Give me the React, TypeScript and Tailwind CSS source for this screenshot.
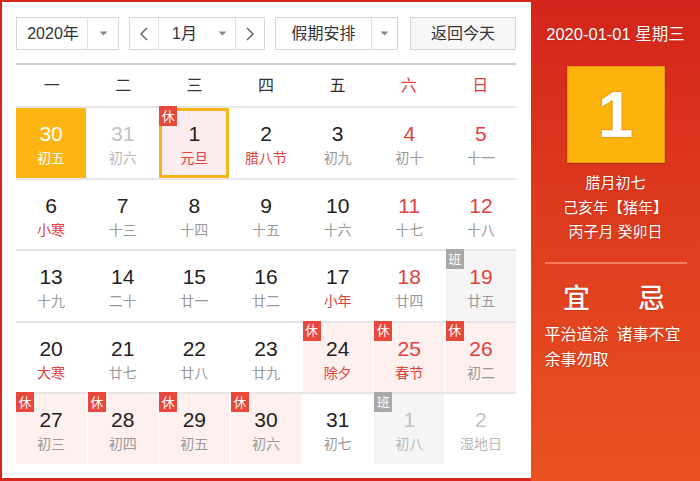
import React from "react";

type Cell = {
  d: number;
  l: string;
  kind?: "prev" | "next" | "cur";
  red?: boolean;
  lred?: boolean;
  badge?: "休" | "班";
  today?: boolean;
  sel?: boolean;
};

const rows: Cell[][] = [
  [
    { d: 30, l: "初五", kind: "prev", today: true },
    { d: 31, l: "初六", kind: "prev" },
    { d: 1, l: "元旦", lred: true, badge: "休", sel: true },
    { d: 2, l: "腊八节", lred: true },
    { d: 3, l: "初九" },
    { d: 4, l: "初十", red: true },
    { d: 5, l: "十一", red: true },
  ],
  [
    { d: 6, l: "小寒", lred: true },
    { d: 7, l: "十三" },
    { d: 8, l: "十四" },
    { d: 9, l: "十五" },
    { d: 10, l: "十六" },
    { d: 11, l: "十七", red: true },
    { d: 12, l: "十八", red: true },
  ],
  [
    { d: 13, l: "十九" },
    { d: 14, l: "二十" },
    { d: 15, l: "廿一" },
    { d: 16, l: "廿二" },
    { d: 17, l: "小年", lred: true },
    { d: 18, l: "廿四", red: true },
    { d: 19, l: "廿五", red: true, badge: "班" },
  ],
  [
    { d: 20, l: "大寒", lred: true },
    { d: 21, l: "廿七" },
    { d: 22, l: "廿八" },
    { d: 23, l: "廿九" },
    { d: 24, l: "除夕", lred: true, badge: "休" },
    { d: 25, l: "春节", red: true, lred: true, badge: "休" },
    { d: 26, l: "初二", red: true, badge: "休" },
  ],
  [
    { d: 27, l: "初三", badge: "休" },
    { d: 28, l: "初四", badge: "休" },
    { d: 29, l: "初五", badge: "休" },
    { d: 30, l: "初六", badge: "休" },
    { d: 31, l: "初七" },
    { d: 1, l: "初八", kind: "next", badge: "班" },
    { d: 2, l: "湿地日", kind: "next" },
  ],
];

const weekdays = ["一", "二", "三", "四", "五", "六", "日"];

function Arrow() {
  return (
    <svg width="9" height="5" viewBox="0 0 9 5">
      <path d="M0.5 0.5 L8.5 0.5 L4.5 4.5 Z" fill="#8a8a8a" />
    </svg>
  );
}

function DayCell({ c }: { c: Cell }) {
  let bg = "bg-white";
  if (c.today) bg = "bg-[#fdb514]";
  else if (c.badge === "休") bg = "bg-[#fdf0ee]";
  else if (c.badge === "班") bg = "bg-[#f5f5f5]";
  if (c.sel) bg = "bg-[#fdeced]";

  let numColor = "text-[#222]";
  let lunColor = "text-[#999]";
  if (c.today) {
    numColor = "text-white";
    lunColor = "text-white";
  } else if (c.kind === "prev" || c.kind === "next") {
    numColor = "text-[#c2c2c2]";
    lunColor = "text-[#b8b8b8]";
  } else {
    if (c.red) numColor = "text-[#e0413f]";
    if (c.lred) lunColor = "text-[#e0413f]";
  }

  return (
    <div className={`relative h-[69.5px] ${bg} flex flex-col items-center`}>
      {c.sel && (
        <div className="absolute inset-0 shadow-[inset_0_0_0_3px_#f6b51b]" />
      )}
      {c.badge && (
        <div
          className={`absolute left-0 top-[-2px] z-10 w-[18px] h-[20px] flex items-center justify-center text-[13px] leading-none text-white ${
            c.badge === "休" ? "bg-[#e8473c]" : "bg-[#a8a8a8]"
          }`}
        >
          {c.badge}
        </div>
      )}
      <div className={`mt-[15px] text-[21px] leading-[22px] ${numColor}`}>{c.d}</div>
      <div className={`mt-[3px] text-[14px] leading-[20px] ${lunColor}`}>{c.l}</div>
    </div>
  );
}

export default function App() {
  return (
    <div className="w-[700px] h-[481px] flex font-['Liberation_Sans','Noto_Sans_CJK_SC',sans-serif] overflow-hidden">
      {/* Left calendar */}
      <div className="w-[531px] h-[481px] bg-white border-l-2 border-t-2 border-b-[3px] border-[#d7261d] pl-[14px] pr-[15px] pt-[15px] flex flex-col">
        {/* Controls */}
        <div className="flex h-[33px] text-[16px] text-[#333]">
          <div className="w-[103px] h-full border border-[#d6d6d6] flex bg-white">
            <div className="flex-1 flex items-center justify-center pl-[2px]">2020年</div>
            <div className="w-[31px] border-l border-[#e2e2e2] flex items-center justify-center">
              <Arrow />
            </div>
          </div>
          <div className="ml-[10px] w-[136px] h-full border border-[#d6d6d6] flex bg-white">
            <div className="w-[29px] flex items-center justify-center border-r border-[#e2e2e2]">
              <svg width="8" height="14" viewBox="0 0 8 14">
                <path d="M7 1 L1 7 L7 13" fill="none" stroke="#555" strokeWidth="1.3" />
              </svg>
            </div>
            <div className="flex-1 flex items-center pl-[13px] pr-[8px] justify-between">
              <span>1月</span>
              <Arrow />
            </div>
            <div className="w-[29px] flex items-center justify-center border-l border-[#e2e2e2]">
              <svg width="8" height="14" viewBox="0 0 8 14">
                <path d="M1 1 L7 7 L1 13" fill="none" stroke="#555" strokeWidth="1.3" />
              </svg>
            </div>
          </div>
          <div className="ml-[10px] w-[123px] h-full border border-[#d6d6d6] flex bg-white">
            <div className="flex-1 flex items-center justify-center">假期安排</div>
            <div className="w-[26px] border-l border-[#e2e2e2] flex items-center justify-center">
              <Arrow />
            </div>
          </div>
          <div className="ml-[12px] w-[106px] h-full border border-[#d6d6d6] bg-[#f7f7f7] flex items-center justify-center">
            返回今天
          </div>
        </div>

        {/* Weekday header */}
        <div className="mt-[13px] border-t-2 border-[#cdcdcd] grid grid-cols-7 h-[43px] items-center text-[16px]">
          {weekdays.map((w, i) => (
            <div
              key={w}
              className={`text-center ${i >= 5 ? "text-[#e0413f]" : "text-[#333]"}`}
            >
              {w}
            </div>
          ))}
        </div>

        {/* Rows */}
        {rows.map((r, ri) => (
          <div key={ri} className="grid grid-cols-7 gap-x-[1.5px] border-t-2 border-[#e6e6e6]">
            {r.map((c, ci) => (
              <DayCell key={ci} c={c} />
            ))}
          </div>
        ))}
      </div>

      {/* Right panel */}
      <div className="flex-1 h-full bg-gradient-to-b from-[#d4241c] to-[#ea5221] flex flex-col items-center text-white [text-shadow:0_0_2px_rgba(150,20,0,0.5)]">
        <div className="mt-[24px] text-[16.5px] leading-[20px]">2020-01-01 星期三</div>
        <div className="mt-[22px] w-[98px] h-[97px] bg-[#fdb40c] border border-[#e79a10] shadow-[0_1px_2px_rgba(120,20,0,0.4)] flex items-center justify-center text-[64px] font-bold leading-none">
          1
        </div>
        <div className="mt-[8px] text-[15px] leading-[24.5px] text-center">
          <div>腊月初七</div>
          <div>己亥年【猪年】</div>
          <div>丙子月 癸卯日</div>
        </div>
        <div className="mt-[17px] w-[142px] h-[2px] bg-[#f17d5c]" />
        <div className="mt-[18px] w-[142px] flex text-[16px] leading-[25px]">
          <div className="w-[72px] flex flex-col">
            <div className="text-[27px] font-medium leading-[34px] w-[64px] text-center mb-[6px]">宜</div>
            <div>平治道涂 余事勿取</div>
          </div>
          <div className="flex-1 flex flex-col">
            <div className="text-[27px] font-medium leading-[34px] text-center mb-[6px]">忌</div>
            <div>诸事不宜</div>
          </div>
        </div>
      </div>
    </div>
  );
}
